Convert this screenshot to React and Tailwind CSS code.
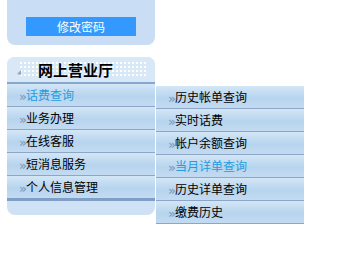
const leftItems = [
  { label: '话费查询', active: true },
  { label: '业务办理' },
  { label: '在线客服' },
  { label: '短消息服务' },
  { label: '个人信息管理' },
]

const subItems = [
  { label: '历史帐单查询' },
  { label: '实时话费' },
  { label: '帐户余额查询' },
  { label: '当月详单查询', active: true },
  { label: '历史详单查询' },
  { label: '缴费历史' },
]

function Row({ label, active, last, pad }) {
  return (
    <div
      className={`flex items-center bg-[linear-gradient(to_bottom,#d3e6f6,#b7d4ee_55%,#c3dbf1)] ${
        last ? 'border-b-[3px] border-[#7f9fc6] h-[25px]' : 'border-b border-[#8ba6c6] h-[23px]'
      } ${pad}`}
    >
      <span
        className="text-[#7b97b6] text-[13px] leading-none w-[7px] mt-[3px]"
        style={{ fontFamily: '"DejaVu Sans", sans-serif' }}
      >
        »
      </span>
      <span className={`text-[12px] leading-none ${active ? 'text-[#1e9ee0]' : 'text-black'}`}>{label}</span>
    </div>
  )
}

export default function App() {
  return (
    <div
      className="flex items-start bg-white w-[353px] h-[272px]"
      style={{ fontFamily: '"Noto Sans CJK SC", "Noto Sans", sans-serif' }}
    >
      <div className="ml-[7px] w-[148px] flex flex-col">
        <div className="h-[45px] bg-[#c9def4] rounded-b-[8px] flex justify-center pt-[17px]">
          <div className="w-[110px] h-[19px] bg-[#3399ff] text-white text-[12px] flex items-center justify-center">
            修改密码
          </div>
        </div>

        <div className="mt-[12px] rounded-[8px] bg-[#cfe2f5] overflow-hidden">
          <div className="h-[27px] bg-[#d8e8f7] flex items-center relative border-b-2 border-[#86a8ce]">
            <div className="absolute left-[12px] right-[8px] top-[4px] bottom-[4px] bg-[radial-gradient(circle,#ffffff_0.9px,transparent_1px)] bg-[length:4px_4px] opacity-90" />
            <svg width="8" height="8" viewBox="0 0 8 8" className="relative ml-[8px] mt-[6px]">
              <path d="M6 1 L2 5 L6 6 Z" fill="#9aa7b4" />
            </svg>
            <span className="relative ml-[15px] text-[15px] font-bold text-black leading-none">网上营业厅</span>
          </div>
          {leftItems.map((it, i) => (
            <Row key={it.label} {...it} last={i === leftItems.length - 1} pad="pl-[12px]" />
          ))}
          <div className="h-[14px]" />
        </div>
      </div>

      <div className="mt-[86px] ml-[1px] w-[148px] flex flex-col">
        {subItems.map((it) => (
          <Row key={it.label} {...it} pad="pl-[12px]" />
        ))}
      </div>
    </div>
  )
}
